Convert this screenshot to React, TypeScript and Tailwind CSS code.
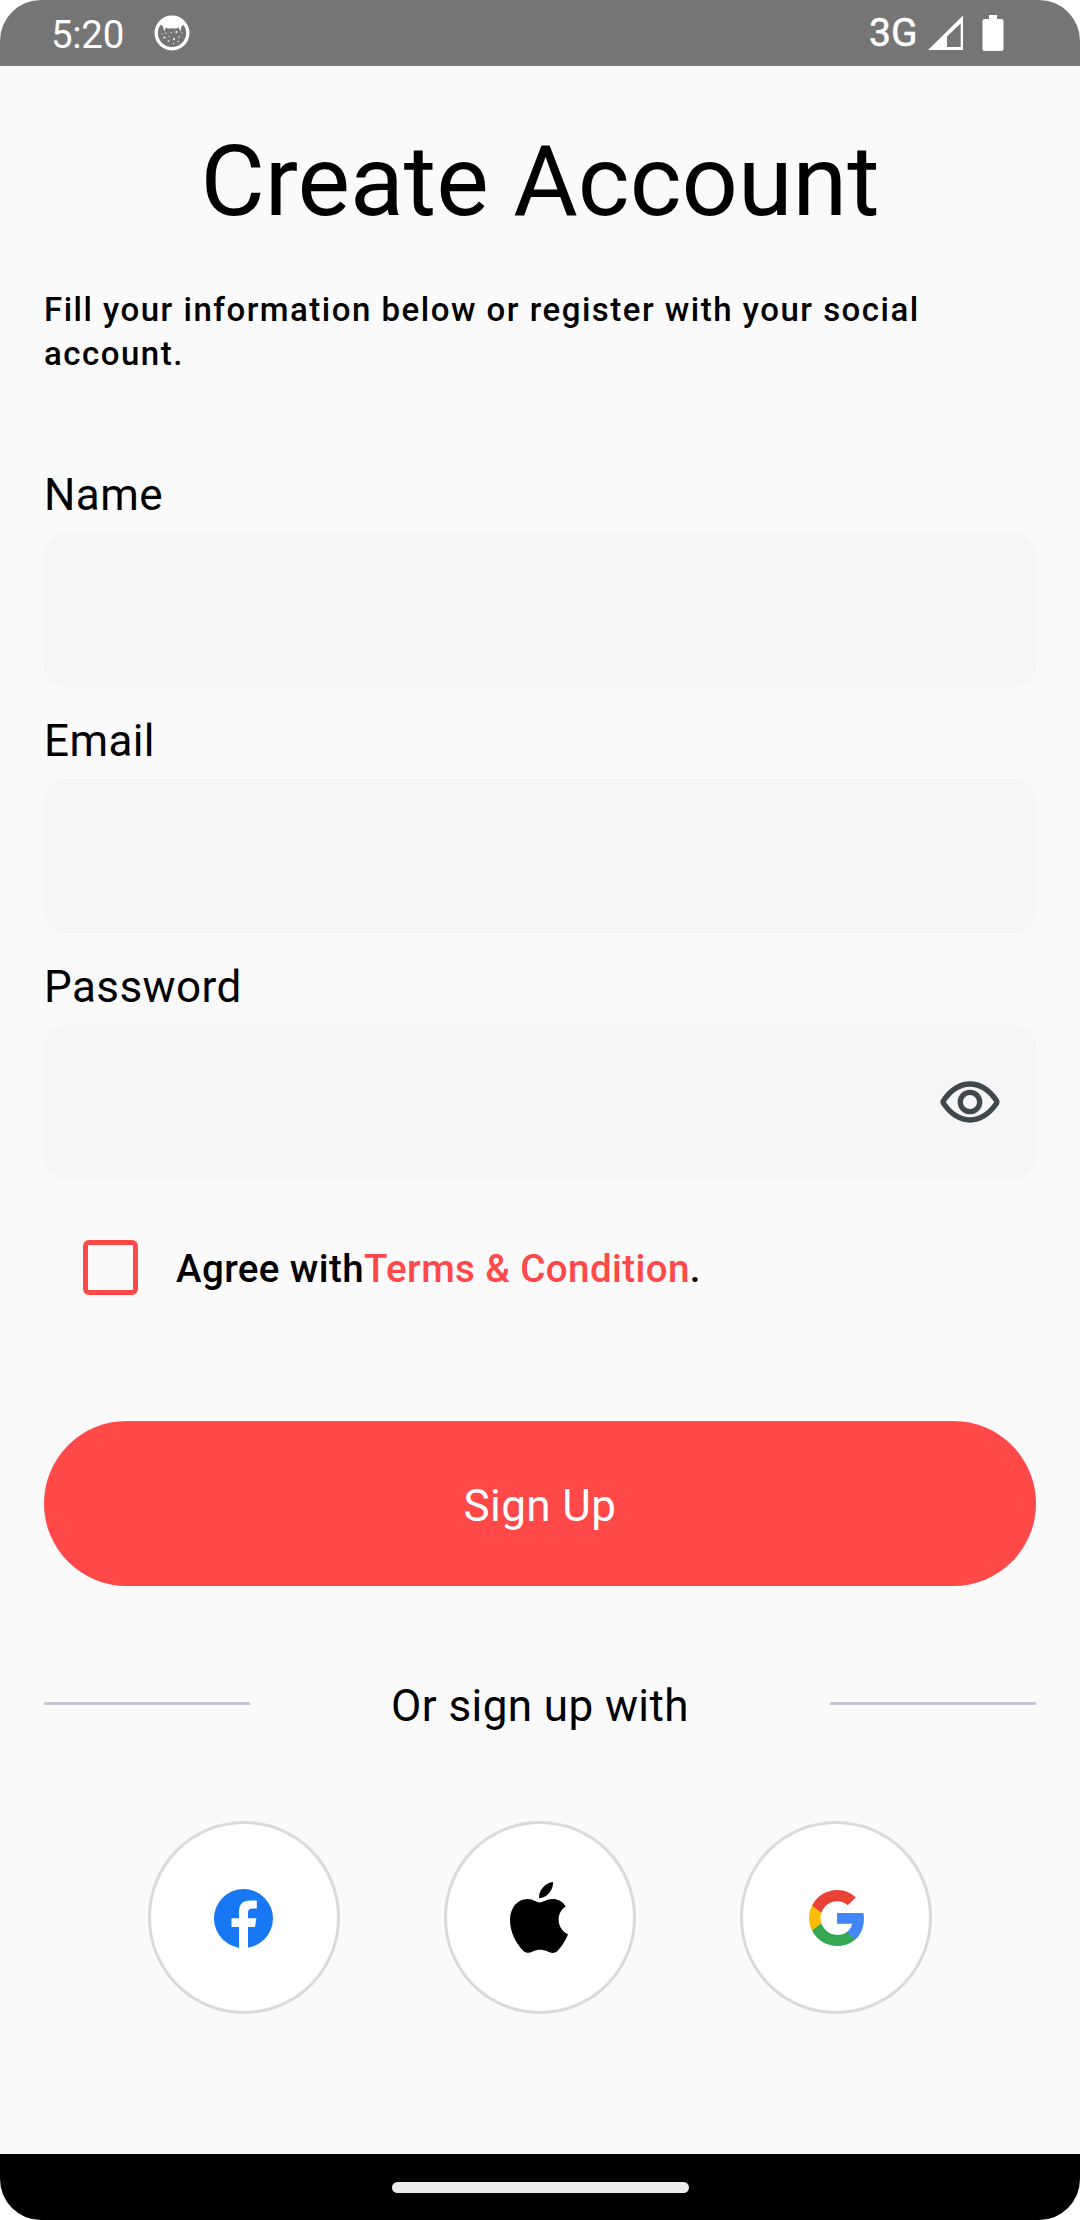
import React from "react";

function CatIcon() {
  return (
    <svg className="h-[36px] w-[36px]" viewBox="0 0 36 36">
      <circle cx="18" cy="18" r="15.8" fill="none" stroke="#fff" strokeWidth="3.4" />
      <path
        d="M5 13 L7 7.5 Q12 2 18 2 Q24 2 29 7.5 L31 13 L30 9.5 L27.3 11.5 L26.6 16.5 L24.6 12.5 Q21.5 14.5 18 12.9 Q14.5 14.5 11.8 12.5 L10.2 16.5 L9 11.5 L6.6 9.5 Z"
        fill="#fff"
      />
      <g fill="#fff">
        <circle cx="8" cy="19" r=".6" />
        <circle cx="12" cy="18" r=".7" />
        <circle cx="17" cy="17.5" r=".6" />
        <circle cx="22.5" cy="17" r="1" />
        <circle cx="10.5" cy="22.5" r="1" />
        <circle cx="15" cy="21.5" r=".6" />
        <circle cx="20" cy="24" r="1" />
        <circle cx="25" cy="22" r=".7" />
        <circle cx="28" cy="18" r=".6" />
        <circle cx="14.5" cy="26" r=".8" />
        <circle cx="19.5" cy="28.5" r=".6" />
        <circle cx="24" cy="26.5" r=".7" />
      </g>
    </svg>
  );
}

function StatusBar() {
  return (
    <header className="flex h-[66px] shrink-0 items-start justify-between bg-[#757575] pr-[76px] pl-[51px] text-white">
      <div className="flex">
        <span className="w-[103px] pt-[12px] text-[38.5px] leading-[46px] tracking-[-0.3px]">5:20</span>
        <div className="pt-[15px]">
          <CatIcon />
        </div>
      </div>
      <div className="flex">
        <span className="w-[59px] pt-[10px] text-[39px] leading-[46px] [-webkit-text-stroke:0.5px_white]">3G</span>
        <svg className="mt-[15px] h-[36px] w-[36px]" viewBox="0 0 36 36">
          <path fillRule="evenodd" d="M35 .5V35H0ZM32.7 8.5V32H19V21.5Z" fill="#fff" />
        </svg>
        <svg className="mt-[15px] ml-[18px] h-[36px] w-[22px]" viewBox="0 0 22 36">
          <path
            d="M7 0h8v4h4.5a2 2 0 0 1 2 2v28a2 2 0 0 1-2 2h-17a2 2 0 0 1-2-2V6a2 2 0 0 1 2-2H7Z"
            fill="#fff"
          />
        </svg>
      </div>
    </header>
  );
}

function EyeIcon() {
  return (
    <svg className="h-[66px] w-[66px]" viewBox="0 0 66 66" fill="none" stroke="#40484c" strokeWidth="5.3">
      <path
        d="M6.6 31.4Q18 15 33 15Q48 15 59.4 31.4Q60.4 33 59.4 34.6Q48 51 33 51Q18 51 6.6 34.6Q5.6 33 6.6 31.4Z"
        strokeLinejoin="round"
      />
      <circle cx="33" cy="33" r="9.7" />
    </svg>
  );
}

function Field({ label, children }: { label: string; children?: React.ReactNode }) {
  return (
    <div className="flex flex-col">
      <label className="h-[71px] text-[44px] leading-[66px] tracking-[0.41px]">{label}</label>
      <div className="flex h-[154px] items-center justify-end rounded-[22px] bg-[#f6f6f6] pr-[33.5px]">
        {children}
      </div>
    </div>
  );
}

function SocialButton({ children }: { children: React.ReactNode }) {
  return (
    <button className="flex h-[192.5px] w-[192.5px] items-center justify-center rounded-full border-[3px] border-[#dadada] bg-white pt-[1.5px]">
      {children}
    </button>
  );
}

function FacebookLogo() {
  return (
    <svg className="h-[59px] w-[59px]" viewBox="0 0 59 59">
      <circle cx="29.5" cy="29.5" r="29.5" fill="#1877f2" />
      <path
        d="M25 60V38H17.5V29.2H25V22.5Q25 11.5 36 11.5H42.8V19.5H38.5Q34 19.5 34 23.5V29.2H42.4L41 38H34V60Z"
        fill="#fff"
      />
    </svg>
  );
}

function AppleLogo() {
  return (
    <svg className="mr-[3px] h-[72px] w-[58px]" viewBox="0 0 58 72">
      <path d="M43 0C43.6 8 36.5 16.3 29 16.2C28.4 8.5 35.5 .5 43 0Z" fill="#000" />
      <path
        d="M55.6 24.4C45.6 30.6 46.4 46.6 58 52.3C55.8 58 51.6 65 47.2 69.2C44.7 71.4 41 71.4 37.8 69.6C32.4 67 27.8 67 22.6 69.6C19.3 71.4 15.8 71.4 13.2 68.8C5.5 61 0 49.6 0 37.8C0 25.8 7.6 17.1 17.6 17.1C23 17.1 26 20.4 29.8 20.4C33.5 20.4 36.5 17.1 42.6 17.1C47.6 17.1 52.6 19.5 55.6 24.4Z"
        fill="#000"
      />
    </svg>
  );
}

function GoogleLogo() {
  return (
    <svg className="h-[56px] w-[55px]" viewBox="1 1 21.56 22">
      <path
        fill="#4285F4"
        d="M22.56 12.25c0-.78-.07-1.53-.2-2.25H12v4.26h5.92c-.26 1.37-1.04 2.53-2.21 3.31v2.77h3.57c2.08-1.92 3.28-4.74 3.28-8.09z"
      />
      <path
        fill="#34A853"
        d="M12 23c2.97 0 5.46-.98 7.28-2.66l-3.57-2.77c-.98.66-2.23 1.06-3.71 1.06-2.86 0-5.29-1.93-6.16-4.53H2.18v2.84C3.99 20.53 7.7 23 12 23z"
      />
      <path
        fill="#FBBC05"
        d="M5.84 14.09c-.22-.66-.35-1.36-.35-2.09s.13-1.43.35-2.09V7.07H2.18C1.43 8.55 1 10.22 1 12s.43 3.45 1.18 4.93l3.66-2.84z"
      />
      <path
        fill="#EA4335"
        d="M12 5.38c1.62 0 3.06.56 4.21 1.64l3.15-3.15C17.45 2.09 14.97 1 12 1 7.7 1 3.99 3.47 2.18 7.07l3.66 2.84c.87-2.6 3.3-4.53 6.16-4.53z"
      />
    </svg>
  );
}

export default function App() {
  return (
    <div className="h-[2220px] w-[1080px] bg-white font-['Roboto',sans-serif] text-black">
      <div className="flex h-full flex-col overflow-hidden rounded-[41px] bg-[#fafafa]">
        <StatusBar />
        <main className="flex flex-1 flex-col px-[44px]">
          <h1 className="mt-[55px] text-center text-[99px] leading-[121px]">Create Account</h1>
          <p className="mt-[46px] text-[33px] leading-[44px] font-medium tracking-[1.5px]">
            Fill your information below or register with your social account.
          </p>
          <form className="mt-[86px] flex flex-col gap-[21px]">
            <Field label="Name" />
            <Field label="Email" />
            <Field label="Password">
              <EyeIcon />
            </Field>
          </form>
          <div className="mt-[55px] flex h-[66px] items-center pl-[39px]">
            <span className="h-[55px] w-[55px] rounded-[6px] border-[5px] border-[#ff4848]" />
            <p className="ml-[38px] pt-[3px] text-[38.5px] leading-[55px] font-medium tracking-[0.4px]">
              Agree with<span className="text-[#ff4848]">Terms &amp; Condition</span>.
            </p>
          </div>
          <button className="mt-[121px] h-[165px] rounded-full bg-[#ff4848] pt-[4px] text-[44px] leading-[66px] tracking-[0.41px] text-white">
            Sign Up
          </button>
          <div className="mt-[87px] flex h-[66px] items-center justify-between">
            <span className="mb-[5px] h-[3px] w-[206px] bg-[#cac4d0]" />
            <span className="text-[44px] leading-[66px] tracking-[0.41px]">Or sign up with</span>
            <span className="mb-[5px] h-[3px] w-[206px] bg-[#cac4d0]" />
          </div>
          <div className="mt-[82px] flex justify-evenly">
            <SocialButton>
              <FacebookLogo />
            </SocialButton>
            <SocialButton>
              <AppleLogo />
            </SocialButton>
            <SocialButton>
              <GoogleLogo />
            </SocialButton>
          </div>
        </main>
        <footer className="flex h-[66px] shrink-0 items-center justify-center bg-black">
          <div className="h-[11px] w-[297px] rounded-full bg-[#ebebeb]" />
        </footer>
      </div>
    </div>
  );
}
